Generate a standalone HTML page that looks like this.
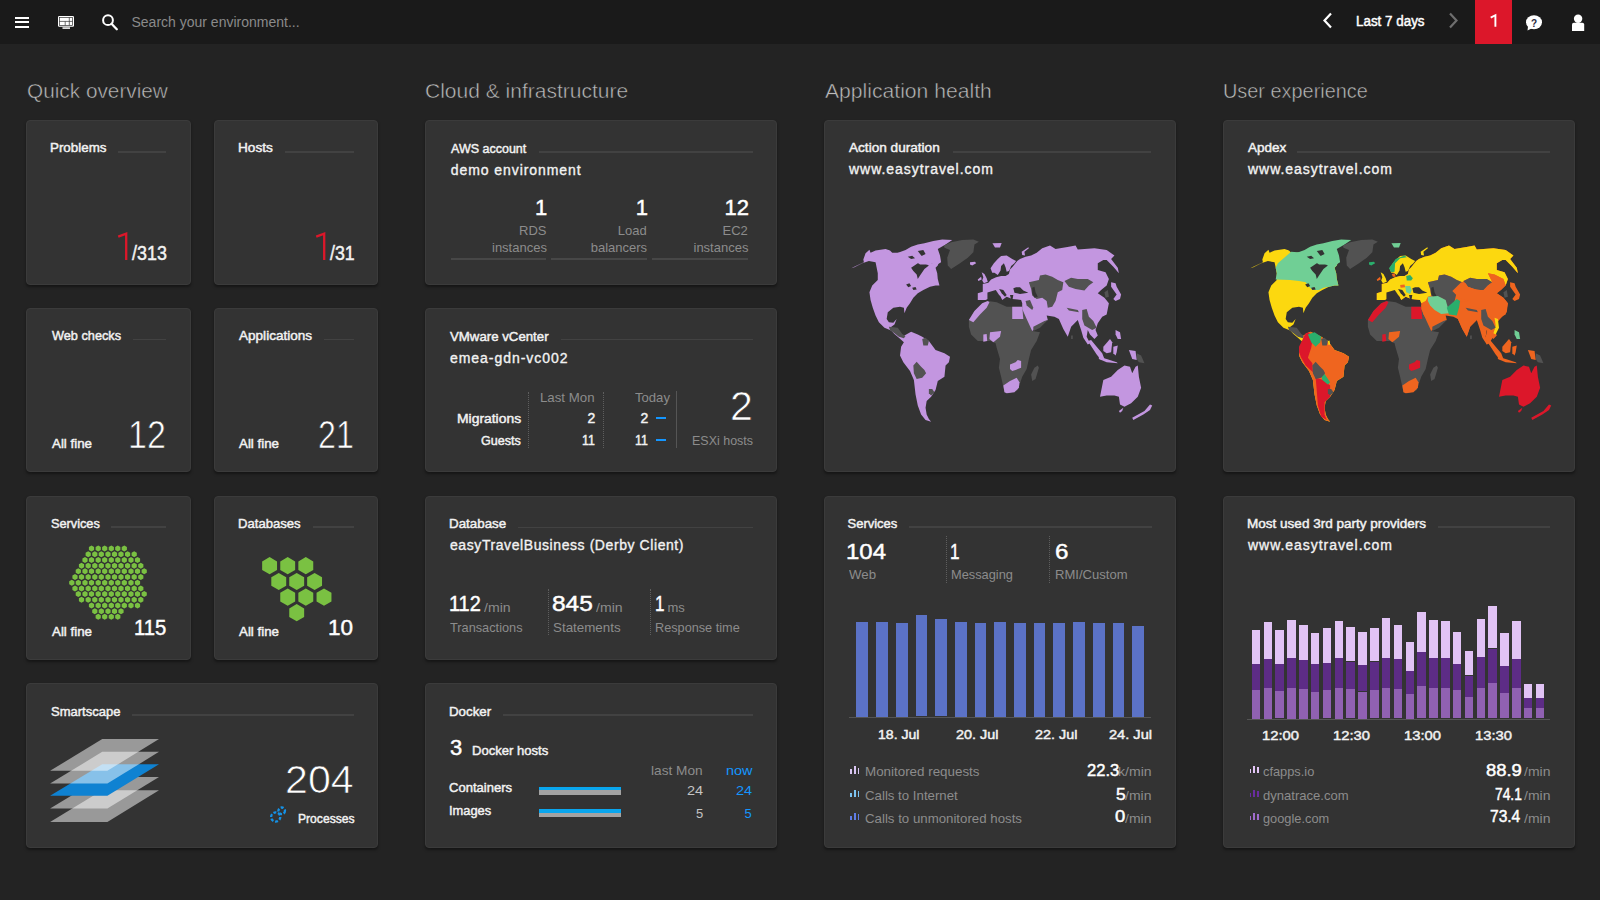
<!DOCTYPE html><html><head><meta charset="utf-8"><style>
html,body{margin:0;padding:0;width:1600px;height:900px;overflow:hidden;background:#232323;font-family:"Liberation Sans",sans-serif}
.t{position:absolute;white-space:nowrap;transform-origin:0 0}
.r{position:absolute}
.s{position:absolute;overflow:visible}
.tile{position:absolute;box-sizing:border-box;background:#333333;border:1px solid #3b3b3b;border-radius:4px;box-shadow:0 2px 3px rgba(0,0,0,.4)}
</style></head><body>
<div class="r" style="left:0.00px;top:0.00px;width:1600.00px;height:44.00px;background:#1a1a1a;"></div>
<div class="r" style="left:15.00px;top:16.80px;width:14.00px;height:2.10px;background:#fff;"></div>
<div class="r" style="left:15.00px;top:21.20px;width:14.00px;height:2.10px;background:#fff;"></div>
<div class="r" style="left:15.00px;top:25.60px;width:14.00px;height:2.10px;background:#fff;"></div>
<svg class="s" style="left:56px;top:14px" width="22" height="18" viewBox="0 0 22 18">
<rect x="2" y="2" width="16" height="10.8" rx="1.2" fill="#fff"/>
<rect x="3.4" y="3.4" width="13.2" height="8" fill="none" stroke="#333" stroke-width="0.7"/>
<path d="M3.4 7.4H16.6M13.3 3.4V11.4M9.2 7.4V11.4" stroke="#333" stroke-width="0.7"/>
<rect x="6.5" y="13.2" width="7.5" height="1.8" fill="#ddd"/></svg>
<svg class="s" style="left:100px;top:12px" width="22" height="22" viewBox="0 0 22 22">
<circle cx="8" cy="8.2" r="4.9" fill="none" stroke="#fff" stroke-width="2"/>
<path d="M11.5 11.8L16.8 17.2" stroke="#fff" stroke-width="2.3" stroke-linecap="round"/></svg>
<div class="t" style="left:131.50px;top:15.00px;font-size:14px;line-height:14px;color:#8a8a8a;">Search your environment...</div>
<svg class="s" style="left:1318px;top:10px" width="20" height="22" viewBox="0 0 20 22">
<path d="M13 3.5L6.5 10.5L13 17.5" fill="none" stroke="#fff" stroke-width="2.2"/></svg>
<div class="t" style="left:1356.04px;top:14.00px;font-size:14px;line-height:14px;color:#fff;transform:scaleX(0.9577);-webkit-text-stroke:0.45px #fff;">Last 7 days</div>
<svg class="s" style="left:1444px;top:10px" width="20" height="22" viewBox="0 0 20 22">
<path d="M6 3.5L12.5 10.5L6 17.5" fill="none" stroke="#6e6e6e" stroke-width="2.2"/></svg>
<div class="r" style="left:1475.00px;top:0.00px;width:37.00px;height:44.00px;background:#dc172a;"></div>
<svg class="s" style="left:1480px;top:10px" width="30" height="24" viewBox="0 0 30 24"><path d="M10.7 7.6L15.4 5.2V16.8" fill="none" stroke="#fff" stroke-width="1.9"/></svg>
<svg class="s" style="left:1524px;top:12px" width="22" height="22" viewBox="0 0 22 22">
<ellipse cx="10" cy="10.3" rx="8" ry="7" fill="#fff"/><path d="M4 14.5L3.5 18.5L8.5 16" fill="#fff"/>
<text x="10" y="14.5" font-family="Liberation Sans" font-size="10" font-weight="bold" text-anchor="middle" fill="#2a2a40">?</text></svg>
<svg class="s" style="left:1568px;top:12px" width="20" height="22" viewBox="0 0 20 22">
<circle cx="10.1" cy="6.7" r="4.2" fill="#fff"/><path d="M4 19V12.5Q4 10.8 5.8 10.8H14.4Q16.2 10.8 16.2 12.5V19Z" fill="#fff"/></svg>
<div class="t" style="left:26.51px;top:80.00px;font-size:21px;line-height:21px;color:#bcbcbc;transform:scaleX(0.9894);-webkit-text-stroke:0.5px #232323;">Quick overview</div>
<div class="t" style="left:425.00px;top:80.00px;font-size:21px;line-height:21px;color:#bcbcbc;-webkit-text-stroke:0.5px #232323;">Cloud &amp; infrastructure</div>
<div class="t" style="left:824.80px;top:80.00px;font-size:21px;line-height:21px;color:#bcbcbc;transform:scaleX(1.0061);-webkit-text-stroke:0.5px #232323;">Application health</div>
<div class="t" style="left:1222.85px;top:80.00px;font-size:21px;line-height:21px;color:#bcbcbc;transform:scaleX(0.9470);-webkit-text-stroke:0.5px #232323;">User experience</div>
<div class="tile" style="left:26px;top:120px;width:165px;height:165px"></div>
<div class="tile" style="left:214px;top:120px;width:164px;height:165px"></div>
<div class="tile" style="left:26px;top:308px;width:165px;height:164px"></div>
<div class="tile" style="left:214px;top:308px;width:164px;height:164px"></div>
<div class="tile" style="left:26px;top:496px;width:165px;height:164px"></div>
<div class="tile" style="left:214px;top:496px;width:164px;height:164px"></div>
<div class="tile" style="left:26px;top:683px;width:352px;height:165px"></div>
<div class="tile" style="left:425px;top:120px;width:352px;height:165px"></div>
<div class="tile" style="left:425px;top:308px;width:352px;height:164px"></div>
<div class="tile" style="left:425px;top:496px;width:352px;height:164px"></div>
<div class="tile" style="left:425px;top:683px;width:352px;height:165px"></div>
<div class="tile" style="left:824px;top:120px;width:352px;height:352px"></div>
<div class="tile" style="left:824px;top:496px;width:352px;height:352px"></div>
<div class="tile" style="left:1223px;top:120px;width:352px;height:352px"></div>
<div class="tile" style="left:1223px;top:496px;width:352px;height:352px"></div>
<div class="t" style="left:50.47px;top:141.00px;font-size:13px;line-height:13px;color:#f2f2f2;transform:scaleX(1.0283);-webkit-text-stroke:0.45px #f2f2f2;">Problems</div>
<div class="r" style="left:118.00px;top:151.00px;width:48.00px;height:1.60px;background:#424242;"></div>
<svg class="s" style="left:110px;top:228px" width="24" height="36" viewBox="0 0 24 36"><path d="M8.2 8.6L16.2 5.6V32" fill="none" stroke="#dc172a" stroke-width="2.3" stroke-linejoin="miter"/></svg>
<div class="t" style="left:131.60px;top:243.10px;font-size:20px;line-height:20px;color:#f2f2f2;transform:scaleX(0.8947);-webkit-text-stroke:0.45px #f2f2f2;">/313</div>
<div class="t" style="left:237.95px;top:141.00px;font-size:13px;line-height:13px;color:#f2f2f2;transform:scaleX(1.0469);-webkit-text-stroke:0.45px #f2f2f2;">Hosts</div>
<div class="r" style="left:285.00px;top:151.00px;width:69.00px;height:1.60px;background:#424242;"></div>
<svg class="s" style="left:308px;top:228px" width="24" height="36" viewBox="0 0 24 36"><path d="M8.2 8.6L16.2 5.6V32" fill="none" stroke="#dc172a" stroke-width="2.3" stroke-linejoin="miter"/></svg>
<div class="t" style="left:330.00px;top:243.10px;font-size:20px;line-height:20px;color:#f2f2f2;transform:scaleX(0.8889);-webkit-text-stroke:0.45px #f2f2f2;">/31</div>
<div class="t" style="left:52.00px;top:329.00px;font-size:13px;line-height:13px;color:#f2f2f2;transform:scaleX(0.9786);-webkit-text-stroke:0.45px #f2f2f2;">Web checks</div>
<div class="r" style="left:132.50px;top:338.50px;width:33.50px;height:1.60px;background:#424242;"></div>
<div class="t" style="left:52.00px;top:437.00px;font-size:13px;line-height:13px;color:#f2f2f2;transform:scaleX(1.0256);-webkit-text-stroke:0.45px #f2f2f2;">All fine</div>
<div class="t" style="left:128.38px;top:415.00px;font-size:39px;line-height:39px;color:#fff;transform:scaleX(0.8718);-webkit-text-stroke:0.7px #333;">12</div>
<div class="t" style="left:239.00px;top:329.00px;font-size:13px;line-height:13px;color:#f2f2f2;transform:scaleX(1.0429);-webkit-text-stroke:0.45px #f2f2f2;">Applications</div>
<div class="r" style="left:324.00px;top:338.50px;width:30.00px;height:1.60px;background:#424242;"></div>
<div class="t" style="left:239.00px;top:437.00px;font-size:13px;line-height:13px;color:#f2f2f2;transform:scaleX(1.0256);-webkit-text-stroke:0.45px #f2f2f2;">All fine</div>
<div class="t" style="left:317.85px;top:415.00px;font-size:39px;line-height:39px;color:#fff;transform:scaleX(0.8250);-webkit-text-stroke:0.7px #333;">21</div>
<div class="t" style="left:51.02px;top:517.00px;font-size:13px;line-height:13px;color:#f2f2f2;transform:scaleX(0.9792);-webkit-text-stroke:0.45px #f2f2f2;">Services</div>
<div class="r" style="left:111.00px;top:526.00px;width:55.00px;height:1.60px;background:#424242;"></div>
<div class="t" style="left:52.00px;top:624.50px;font-size:13px;line-height:13px;color:#f2f2f2;transform:scaleX(1.0256);-webkit-text-stroke:0.45px #f2f2f2;">All fine</div>
<div class="t" style="left:134.16px;top:617.00px;font-size:22px;line-height:22px;color:#fff;transform:scaleX(0.9219);-webkit-text-stroke:0.45px #fff;">115</div>
<div class="t" style="left:237.99px;top:517.00px;font-size:13px;line-height:13px;color:#f2f2f2;transform:scaleX(1.0082);-webkit-text-stroke:0.45px #f2f2f2;">Databases</div>
<div class="r" style="left:312.50px;top:526.00px;width:41.50px;height:1.60px;background:#424242;"></div>
<div class="t" style="left:239.00px;top:624.50px;font-size:13px;line-height:13px;color:#f2f2f2;transform:scaleX(1.0256);-webkit-text-stroke:0.45px #f2f2f2;">All fine</div>
<div class="t" style="left:328.45px;top:617.00px;font-size:22px;line-height:22px;color:#fff;transform:scaleX(1.0227);-webkit-text-stroke:0.45px #fff;">10</div>
<div class="t" style="left:51.00px;top:705.00px;font-size:13px;line-height:13px;color:#f2f2f2;-webkit-text-stroke:0.45px #f2f2f2;">Smartscape</div>
<div class="r" style="left:132.00px;top:714.00px;width:222.00px;height:1.60px;background:#424242;"></div>
<div class="t" style="left:285.33px;top:760.50px;font-size:38px;line-height:38px;color:#fff;transform:scaleX(1.0833);-webkit-text-stroke:0.7px #333;">204</div>
<div class="t" style="left:298.07px;top:812.00px;font-size:13px;line-height:13px;color:#f2f2f2;transform:scaleX(0.9322);-webkit-text-stroke:0.45px #f2f2f2;">Processes</div>
<div class="t" style="left:450.70px;top:141.50px;font-size:13px;line-height:13px;color:#f2f2f2;transform:scaleX(0.9620);-webkit-text-stroke:0.45px #f2f2f2;">AWS account</div>
<div class="r" style="left:539.00px;top:151.00px;width:214.00px;height:1.60px;background:#424242;"></div>
<div class="t" style="left:450.70px;top:163.20px;font-size:14px;line-height:14px;color:#f2f2f2;-webkit-text-stroke:0.35px #f2f2f2;letter-spacing:0.933px;">demo environment</div>
<div class="t" style="left:535.00px;top:196.70px;font-size:22px;line-height:22px;color:#fff;-webkit-text-stroke:0.45px #fff;">1</div>
<div class="t" style="left:519.00px;top:224.20px;font-size:13px;line-height:13px;color:#8c8c8c;">RDS</div>
<div class="t" style="left:492.00px;top:240.50px;font-size:13px;line-height:13px;color:#8c8c8c;">instances</div>
<div class="r" style="left:450.70px;top:258.00px;width:95.30px;height:2.00px;background:#474747;"></div>
<div class="t" style="left:635.70px;top:196.70px;font-size:22px;line-height:22px;color:#fff;-webkit-text-stroke:0.45px #fff;">1</div>
<div class="t" style="left:617.70px;top:224.20px;font-size:13px;line-height:13px;color:#8c8c8c;">Load</div>
<div class="t" style="left:590.70px;top:240.50px;font-size:13px;line-height:13px;color:#8c8c8c;">balancers</div>
<div class="r" style="left:551.00px;top:258.00px;width:95.70px;height:2.00px;background:#474747;"></div>
<div class="t" style="left:724.50px;top:196.70px;font-size:22px;line-height:22px;color:#fff;-webkit-text-stroke:0.45px #fff;">12</div>
<div class="t" style="left:722.50px;top:224.20px;font-size:13px;line-height:13px;color:#8c8c8c;">EC2</div>
<div class="t" style="left:693.50px;top:240.50px;font-size:13px;line-height:13px;color:#8c8c8c;">instances</div>
<div class="r" style="left:652.00px;top:258.00px;width:95.50px;height:2.00px;background:#474747;"></div>
<div class="t" style="left:450.00px;top:329.50px;font-size:13px;line-height:13px;color:#f2f2f2;transform:scaleX(1.0180);-webkit-text-stroke:0.45px #f2f2f2;">VMware vCenter</div>
<div class="r" style="left:560.75px;top:338.50px;width:191.75px;height:1.60px;background:#424242;"></div>
<div class="t" style="left:450.00px;top:350.50px;font-size:14px;line-height:14px;color:#f2f2f2;-webkit-text-stroke:0.35px #f2f2f2;letter-spacing:0.962px;">emea-gdn-vc002</div>
<div class="t" style="left:457.43px;top:412.00px;font-size:13px;line-height:13px;color:#f2f2f2;transform:scaleX(1.0690);-webkit-text-stroke:0.45px #f2f2f2;">Migrations</div>
<div class="t" style="left:480.83px;top:433.50px;font-size:13px;line-height:13px;color:#f2f2f2;transform:scaleX(0.9675);-webkit-text-stroke:0.45px #f2f2f2;">Guests</div>
<div class="t" style="left:540.48px;top:391.00px;font-size:13px;line-height:13px;color:#8c8c8c;transform:scaleX(1.0192);">Last Mon</div>
<div class="t" style="left:587.50px;top:411.00px;font-size:14px;line-height:14px;color:#f2f2f2;-webkit-text-stroke:0.45px #f2f2f2;">2</div>
<div class="t" style="left:582.12px;top:432.50px;font-size:14px;line-height:14px;color:#f2f2f2;transform:scaleX(0.8846);-webkit-text-stroke:0.45px #f2f2f2;">11</div>
<div class="t" style="left:634.50px;top:391.00px;font-size:13px;line-height:13px;color:#8c8c8c;transform:scaleX(1.0074);">Today</div>
<div class="t" style="left:640.50px;top:411.00px;font-size:14px;line-height:14px;color:#f2f2f2;-webkit-text-stroke:0.45px #f2f2f2;">2</div>
<div class="t" style="left:635.12px;top:432.50px;font-size:14px;line-height:14px;color:#f2f2f2;transform:scaleX(0.8846);-webkit-text-stroke:0.45px #f2f2f2;">11</div>
<div class="r" style="left:656.00px;top:417.00px;width:9.50px;height:2.00px;background:#1496ff;"></div>
<div class="r" style="left:656.00px;top:438.50px;width:9.50px;height:2.00px;background:#1496ff;"></div>
<div class="r" style="left:528.0px;top:391.5px;width:0;height:56.5px;border-left:1px dotted #5e5e5e"></div>
<div class="r" style="left:602.5px;top:391.5px;width:0;height:56.5px;border-left:1px dotted #5e5e5e"></div>
<div class="r" style="left:676.00px;top:391.00px;width:1.00px;height:57.00px;background:#555;"></div>
<div class="t" style="left:730.44px;top:385.50px;font-size:40px;line-height:40px;color:#fff;transform:scaleX(1.0278);-webkit-text-stroke:0.7px #333;">2</div>
<div class="t" style="left:692.04px;top:433.50px;font-size:13px;line-height:13px;color:#8c8c8c;transform:scaleX(0.9597);">ESXi hosts</div>
<div class="t" style="left:448.97px;top:517.00px;font-size:13px;line-height:13px;color:#f2f2f2;transform:scaleX(1.0278);-webkit-text-stroke:0.45px #f2f2f2;">Database</div>
<div class="r" style="left:517.50px;top:526.50px;width:235.00px;height:1.60px;background:#424242;"></div>
<div class="t" style="left:450.00px;top:538.00px;font-size:14px;line-height:14px;color:#f2f2f2;-webkit-text-stroke:0.35px #f2f2f2;letter-spacing:0.578px;">easyTravelBusiness (Derby Client)</div>
<div class="t" style="left:448.59px;top:593.10px;font-size:22px;line-height:22px;color:#fff;transform:scaleX(0.9062);-webkit-text-stroke:0.45px #fff;">112</div>
<div class="t" style="left:484.00px;top:600.60px;font-size:13px;line-height:13px;color:#8c8c8c;transform:scaleX(1.0833);">/min</div>
<div class="t" style="left:450.40px;top:620.60px;font-size:13px;line-height:13px;color:#8c8c8c;transform:scaleX(0.9808);">Transactions</div>
<div class="t" style="left:552.49px;top:593.10px;font-size:22px;line-height:22px;color:#fff;transform:scaleX(1.1118);-webkit-text-stroke:0.45px #fff;">845</div>
<div class="t" style="left:596.00px;top:600.60px;font-size:13px;line-height:13px;color:#8c8c8c;transform:scaleX(1.0833);">/min</div>
<div class="t" style="left:552.57px;top:620.60px;font-size:13px;line-height:13px;color:#8c8c8c;transform:scaleX(1.0281);">Statements</div>
<div class="t" style="left:654.84px;top:593.10px;font-size:22px;line-height:22px;color:#fff;transform:scaleX(0.7778);-webkit-text-stroke:0.45px #fff;">1</div>
<div class="t" style="left:667.40px;top:600.60px;font-size:13px;line-height:13px;color:#8c8c8c;">ms</div>
<div class="t" style="left:655.42px;top:620.60px;font-size:13px;line-height:13px;color:#8c8c8c;transform:scaleX(0.9767);">Response time</div>
<div class="r" style="left:547.6px;top:589px;width:0;height:46px;border-left:1px dotted #5e5e5e"></div>
<div class="r" style="left:650.0px;top:589px;width:0;height:46px;border-left:1px dotted #5e5e5e"></div>
<div class="t" style="left:448.98px;top:705.00px;font-size:13px;line-height:13px;color:#f2f2f2;transform:scaleX(1.0250);-webkit-text-stroke:0.45px #f2f2f2;">Docker</div>
<div class="r" style="left:503.00px;top:714.00px;width:249.50px;height:1.60px;background:#424242;"></div>
<div class="t" style="left:450.00px;top:736.50px;font-size:22px;line-height:22px;color:#fff;-webkit-text-stroke:0.45px #fff;">3</div>
<div class="t" style="left:471.59px;top:744.00px;font-size:13px;line-height:13px;color:#f2f2f2;transform:scaleX(1.0054);-webkit-text-stroke:0.45px #f2f2f2;">Docker hosts</div>
<div class="t" style="left:651.45px;top:763.50px;font-size:13px;line-height:13px;color:#8c8c8c;transform:scaleX(1.0521);">last Mon</div>
<div class="t" style="left:725.79px;top:763.50px;font-size:13px;line-height:13px;color:#1496ff;transform:scaleX(1.1136);">now</div>
<div class="t" style="left:449.40px;top:781.00px;font-size:13px;line-height:13px;color:#f2f2f2;transform:scaleX(1.0033);-webkit-text-stroke:0.45px #f2f2f2;">Containers</div>
<div class="t" style="left:449.41px;top:803.50px;font-size:13px;line-height:13px;color:#f2f2f2;transform:scaleX(0.9902);-webkit-text-stroke:0.45px #f2f2f2;">Images</div>
<div class="r" style="left:539.00px;top:786.60px;width:82.00px;height:3.80px;background:#0aa6ee;"></div>
<div class="r" style="left:539.00px;top:790.40px;width:82.00px;height:4.60px;background:#a3a3a3;"></div>
<div class="r" style="left:539.00px;top:809.00px;width:82.00px;height:3.80px;background:#0aa6ee;"></div>
<div class="r" style="left:539.00px;top:812.80px;width:82.00px;height:4.60px;background:#a3a3a3;"></div>
<div class="t" style="left:687.38px;top:784.00px;font-size:13px;line-height:13px;color:#c4c4c4;transform:scaleX(1.1154);">24</div>
<div class="t" style="left:735.78px;top:784.00px;font-size:13px;line-height:13px;color:#1496ff;transform:scaleX(1.1154);">24</div>
<div class="t" style="left:696.00px;top:806.50px;font-size:13px;line-height:13px;color:#c4c4c4;">5</div>
<div class="t" style="left:744.40px;top:806.50px;font-size:13px;line-height:13px;color:#1496ff;">5</div>
<div class="t" style="left:849.00px;top:141.00px;font-size:13px;line-height:13px;color:#f2f2f2;transform:scaleX(1.0460);-webkit-text-stroke:0.45px #f2f2f2;">Action duration</div>
<div class="r" style="left:953.00px;top:151.00px;width:198.00px;height:1.60px;background:#424242;"></div>
<div class="t" style="left:849.00px;top:162.40px;font-size:14px;line-height:14px;color:#f2f2f2;-webkit-text-stroke:0.35px #f2f2f2;letter-spacing:0.959px;">www.easytravel.com</div>
<div class="t" style="left:1248.00px;top:141.00px;font-size:13px;line-height:13px;color:#f2f2f2;transform:scaleX(1.0389);-webkit-text-stroke:0.45px #f2f2f2;">Apdex</div>
<div class="r" style="left:1297.00px;top:151.00px;width:253.00px;height:1.60px;background:#424242;"></div>
<div class="t" style="left:1248.00px;top:162.40px;font-size:14px;line-height:14px;color:#f2f2f2;-webkit-text-stroke:0.35px #f2f2f2;letter-spacing:0.959px;">www.easytravel.com</div>
<div class="t" style="left:847.50px;top:516.80px;font-size:13px;line-height:13px;color:#f2f2f2;-webkit-text-stroke:0.45px #f2f2f2;">Services</div>
<div class="r" style="left:909.00px;top:526.00px;width:242.50px;height:1.60px;background:#424242;"></div>
<div class="t" style="left:846.32px;top:541.40px;font-size:22px;line-height:22px;color:#fff;transform:scaleX(1.0882);-webkit-text-stroke:0.45px #fff;">104</div>
<div class="t" style="left:848.50px;top:568.20px;font-size:13px;line-height:13px;color:#8c8c8c;transform:scaleX(1.0192);">Web</div>
<div class="t" style="left:950.44px;top:541.40px;font-size:22px;line-height:22px;color:#fff;transform:scaleX(0.7778);-webkit-text-stroke:0.45px #fff;">1</div>
<div class="t" style="left:951.02px;top:568.20px;font-size:13px;line-height:13px;color:#8c8c8c;transform:scaleX(0.9839);">Messaging</div>
<div class="t" style="left:1054.60px;top:541.40px;font-size:22px;line-height:22px;color:#fff;transform:scaleX(1.1000);-webkit-text-stroke:0.45px #fff;">6</div>
<div class="t" style="left:1054.70px;top:568.20px;font-size:13px;line-height:13px;color:#8c8c8c;transform:scaleX(1.0043);">RMI/Custom</div>
<div class="r" style="left:946.4px;top:536px;width:0;height:47px;border-left:1px dotted #5e5e5e"></div>
<div class="r" style="left:1048.7px;top:536px;width:0;height:47px;border-left:1px dotted #5e5e5e"></div>
<div class="r" style="left:856.40px;top:621.50px;width:11.80px;height:95.00px;background:#5b72c6;"></div>
<div class="r" style="left:876.10px;top:621.50px;width:11.80px;height:95.00px;background:#5b72c6;"></div>
<div class="r" style="left:895.80px;top:622.50px;width:11.80px;height:94.00px;background:#5b72c6;"></div>
<div class="r" style="left:915.50px;top:614.60px;width:11.80px;height:101.90px;background:#5b72c6;"></div>
<div class="r" style="left:935.20px;top:619.20px;width:11.80px;height:97.30px;background:#5b72c6;"></div>
<div class="r" style="left:954.90px;top:621.50px;width:11.80px;height:95.00px;background:#5b72c6;"></div>
<div class="r" style="left:974.60px;top:622.50px;width:11.80px;height:94.00px;background:#5b72c6;"></div>
<div class="r" style="left:994.30px;top:621.50px;width:11.80px;height:95.00px;background:#5b72c6;"></div>
<div class="r" style="left:1014.00px;top:622.50px;width:11.80px;height:94.00px;background:#5b72c6;"></div>
<div class="r" style="left:1033.70px;top:622.50px;width:11.80px;height:94.00px;background:#5b72c6;"></div>
<div class="r" style="left:1053.40px;top:622.50px;width:11.80px;height:94.00px;background:#5b72c6;"></div>
<div class="r" style="left:1073.10px;top:621.50px;width:11.80px;height:95.00px;background:#5b72c6;"></div>
<div class="r" style="left:1092.80px;top:622.50px;width:11.80px;height:94.00px;background:#5b72c6;"></div>
<div class="r" style="left:1112.50px;top:622.50px;width:11.80px;height:94.00px;background:#5b72c6;"></div>
<div class="r" style="left:1132.20px;top:626.00px;width:11.80px;height:90.50px;background:#5b72c6;"></div>
<div class="r" style="left:849.00px;top:716.50px;width:302.00px;height:1.20px;background:#555;"></div>
<div class="t" style="left:877.92px;top:728.00px;font-size:13px;line-height:13px;color:#f2f2f2;transform:scaleX(1.0833);-webkit-text-stroke:0.45px #f2f2f2;">18. Jul</div>
<div class="t" style="left:955.89px;top:728.00px;font-size:13px;line-height:13px;color:#f2f2f2;transform:scaleX(1.1083);-webkit-text-stroke:0.45px #f2f2f2;">20. Jul</div>
<div class="t" style="left:1034.79px;top:728.00px;font-size:13px;line-height:13px;color:#f2f2f2;transform:scaleX(1.1056);-webkit-text-stroke:0.45px #f2f2f2;">22. Jul</div>
<div class="t" style="left:1109.08px;top:728.00px;font-size:13px;line-height:13px;color:#f2f2f2;transform:scaleX(1.1222);-webkit-text-stroke:0.45px #f2f2f2;">24. Jul</div>
<div class="t" style="left:864.77px;top:765.25px;font-size:13px;line-height:13px;color:#8c8c8c;transform:scaleX(1.0291);">Monitored requests</div>
<div class="t" style="left:1117.67px;top:765.25px;font-size:13px;line-height:13px;color:#8c8c8c;transform:scaleX(1.0833);">k/min</div>
<div class="t" style="left:1086.87px;top:762.75px;font-size:16px;line-height:16px;color:#fff;transform:scaleX(1.0345);-webkit-text-stroke:0.45px #fff;">22.3</div>
<div class="r" style="left:850.30px;top:769.05px;width:1.80px;height:4.50px;background:#d9c6f2;"></div>
<div class="r" style="left:854.10px;top:766.05px;width:1.80px;height:7.50px;background:#d9c6f2;"></div>
<div class="r" style="left:857.60px;top:767.55px;width:1.80px;height:6.00px;background:#d9c6f2;"></div>
<div class="t" style="left:864.78px;top:789.00px;font-size:13px;line-height:13px;color:#8c8c8c;transform:scaleX(1.0189);">Calls to Internet</div>
<div class="t" style="left:1125.40px;top:789.00px;font-size:13px;line-height:13px;color:#8c8c8c;transform:scaleX(1.0771);">/min</div>
<div class="t" style="left:1115.91px;top:786.50px;font-size:16px;line-height:16px;color:#fff;transform:scaleX(1.0857);-webkit-text-stroke:0.45px #fff;">5</div>
<div class="r" style="left:850.30px;top:792.80px;width:1.80px;height:4.50px;background:#7cc4f2;"></div>
<div class="r" style="left:854.10px;top:789.80px;width:1.80px;height:7.50px;background:#7cc4f2;"></div>
<div class="r" style="left:857.60px;top:791.30px;width:1.80px;height:6.00px;background:#7cc4f2;"></div>
<div class="t" style="left:864.78px;top:811.90px;font-size:13px;line-height:13px;color:#8c8c8c;transform:scaleX(1.0197);">Calls to unmonitored hosts</div>
<div class="t" style="left:1125.40px;top:811.90px;font-size:13px;line-height:13px;color:#8c8c8c;transform:scaleX(1.0771);">/min</div>
<div class="t" style="left:1115.40px;top:809.40px;font-size:16px;line-height:16px;color:#fff;transform:scaleX(1.1500);-webkit-text-stroke:0.45px #fff;">0</div>
<div class="r" style="left:850.30px;top:815.70px;width:1.80px;height:4.50px;background:#5f7de6;"></div>
<div class="r" style="left:854.10px;top:812.70px;width:1.80px;height:7.50px;background:#5f7de6;"></div>
<div class="r" style="left:857.60px;top:814.20px;width:1.80px;height:6.00px;background:#5f7de6;"></div>
<div class="t" style="left:1246.96px;top:516.80px;font-size:13px;line-height:13px;color:#f2f2f2;transform:scaleX(1.0409);-webkit-text-stroke:0.45px #f2f2f2;">Most used 3rd party providers</div>
<div class="r" style="left:1438.40px;top:526.00px;width:111.60px;height:1.60px;background:#424242;"></div>
<div class="t" style="left:1248.00px;top:537.60px;font-size:14px;line-height:14px;color:#f2f2f2;-webkit-text-stroke:0.35px #f2f2f2;letter-spacing:0.959px;">www.easytravel.com</div>
<div class="r" style="left:1251.80px;top:629.60px;width:8.50px;height:34.40px;background:#e1c3f5;"></div>
<div class="r" style="left:1251.80px;top:664.00px;width:8.50px;height:26.00px;background:#5d2c86;"></div>
<div class="r" style="left:1251.80px;top:690.00px;width:8.50px;height:28.50px;background:#9061b2;"></div>
<div class="r" style="left:1263.63px;top:622.40px;width:8.50px;height:36.60px;background:#e1c3f5;"></div>
<div class="r" style="left:1263.63px;top:659.00px;width:8.50px;height:29.00px;background:#5d2c86;"></div>
<div class="r" style="left:1263.63px;top:688.00px;width:8.50px;height:30.50px;background:#9061b2;"></div>
<div class="r" style="left:1275.46px;top:629.60px;width:8.50px;height:34.40px;background:#e1c3f5;"></div>
<div class="r" style="left:1275.46px;top:664.00px;width:8.50px;height:27.30px;background:#5d2c86;"></div>
<div class="r" style="left:1275.46px;top:691.30px;width:8.50px;height:27.20px;background:#9061b2;"></div>
<div class="r" style="left:1287.29px;top:620.00px;width:8.50px;height:38.00px;background:#e1c3f5;"></div>
<div class="r" style="left:1287.29px;top:658.00px;width:8.50px;height:30.00px;background:#5d2c86;"></div>
<div class="r" style="left:1287.29px;top:688.00px;width:8.50px;height:30.50px;background:#9061b2;"></div>
<div class="r" style="left:1299.12px;top:624.70px;width:8.50px;height:35.60px;background:#e1c3f5;"></div>
<div class="r" style="left:1299.12px;top:660.30px;width:8.50px;height:28.70px;background:#5d2c86;"></div>
<div class="r" style="left:1299.12px;top:689.00px;width:8.50px;height:29.50px;background:#9061b2;"></div>
<div class="r" style="left:1310.95px;top:633.00px;width:8.50px;height:31.00px;background:#e1c3f5;"></div>
<div class="r" style="left:1310.95px;top:664.00px;width:8.50px;height:27.50px;background:#5d2c86;"></div>
<div class="r" style="left:1310.95px;top:691.50px;width:8.50px;height:27.00px;background:#9061b2;"></div>
<div class="r" style="left:1322.78px;top:628.30px;width:8.50px;height:34.40px;background:#e1c3f5;"></div>
<div class="r" style="left:1322.78px;top:662.70px;width:8.50px;height:27.70px;background:#5d2c86;"></div>
<div class="r" style="left:1322.78px;top:690.40px;width:8.50px;height:28.10px;background:#9061b2;"></div>
<div class="r" style="left:1334.61px;top:621.00px;width:8.50px;height:37.00px;background:#e1c3f5;"></div>
<div class="r" style="left:1334.61px;top:658.00px;width:8.50px;height:30.00px;background:#5d2c86;"></div>
<div class="r" style="left:1334.61px;top:688.00px;width:8.50px;height:30.50px;background:#9061b2;"></div>
<div class="r" style="left:1346.44px;top:627.10px;width:8.50px;height:34.40px;background:#e1c3f5;"></div>
<div class="r" style="left:1346.44px;top:661.50px;width:8.50px;height:27.70px;background:#5d2c86;"></div>
<div class="r" style="left:1346.44px;top:689.20px;width:8.50px;height:29.30px;background:#9061b2;"></div>
<div class="r" style="left:1358.27px;top:632.20px;width:8.50px;height:32.90px;background:#e1c3f5;"></div>
<div class="r" style="left:1358.27px;top:665.10px;width:8.50px;height:26.40px;background:#5d2c86;"></div>
<div class="r" style="left:1358.27px;top:691.50px;width:8.50px;height:27.00px;background:#9061b2;"></div>
<div class="r" style="left:1370.10px;top:628.40px;width:8.50px;height:33.10px;background:#e1c3f5;"></div>
<div class="r" style="left:1370.10px;top:661.50px;width:8.50px;height:28.60px;background:#5d2c86;"></div>
<div class="r" style="left:1370.10px;top:690.10px;width:8.50px;height:28.40px;background:#9061b2;"></div>
<div class="r" style="left:1381.93px;top:617.90px;width:8.50px;height:40.30px;background:#e1c3f5;"></div>
<div class="r" style="left:1381.93px;top:658.20px;width:8.50px;height:30.00px;background:#5d2c86;"></div>
<div class="r" style="left:1381.93px;top:688.20px;width:8.50px;height:30.30px;background:#9061b2;"></div>
<div class="r" style="left:1393.76px;top:624.80px;width:8.50px;height:34.50px;background:#e1c3f5;"></div>
<div class="r" style="left:1393.76px;top:659.30px;width:8.50px;height:29.80px;background:#5d2c86;"></div>
<div class="r" style="left:1393.76px;top:689.10px;width:8.50px;height:29.40px;background:#9061b2;"></div>
<div class="r" style="left:1405.59px;top:642.40px;width:8.50px;height:28.50px;background:#e1c3f5;"></div>
<div class="r" style="left:1405.59px;top:670.90px;width:8.50px;height:23.10px;background:#5d2c86;"></div>
<div class="r" style="left:1405.59px;top:694.00px;width:8.50px;height:24.50px;background:#9061b2;"></div>
<div class="r" style="left:1417.42px;top:612.10px;width:8.50px;height:40.00px;background:#e1c3f5;"></div>
<div class="r" style="left:1417.42px;top:652.10px;width:8.50px;height:33.70px;background:#5d2c86;"></div>
<div class="r" style="left:1417.42px;top:685.80px;width:8.50px;height:32.70px;background:#9061b2;"></div>
<div class="r" style="left:1429.25px;top:620.30px;width:8.50px;height:37.90px;background:#e1c3f5;"></div>
<div class="r" style="left:1429.25px;top:658.20px;width:8.50px;height:30.00px;background:#5d2c86;"></div>
<div class="r" style="left:1429.25px;top:688.20px;width:8.50px;height:30.30px;background:#9061b2;"></div>
<div class="r" style="left:1441.08px;top:621.30px;width:8.50px;height:36.60px;background:#e1c3f5;"></div>
<div class="r" style="left:1441.08px;top:657.90px;width:8.50px;height:29.90px;background:#5d2c86;"></div>
<div class="r" style="left:1441.08px;top:687.80px;width:8.50px;height:30.70px;background:#9061b2;"></div>
<div class="r" style="left:1452.91px;top:631.90px;width:8.50px;height:32.00px;background:#e1c3f5;"></div>
<div class="r" style="left:1452.91px;top:663.90px;width:8.50px;height:26.50px;background:#5d2c86;"></div>
<div class="r" style="left:1452.91px;top:690.40px;width:8.50px;height:28.10px;background:#9061b2;"></div>
<div class="r" style="left:1464.74px;top:650.60px;width:8.50px;height:24.90px;background:#e1c3f5;"></div>
<div class="r" style="left:1464.74px;top:675.50px;width:8.50px;height:21.60px;background:#5d2c86;"></div>
<div class="r" style="left:1464.74px;top:697.10px;width:8.50px;height:21.40px;background:#9061b2;"></div>
<div class="r" style="left:1476.57px;top:618.90px;width:8.50px;height:38.00px;background:#e1c3f5;"></div>
<div class="r" style="left:1476.57px;top:656.90px;width:8.50px;height:30.90px;background:#5d2c86;"></div>
<div class="r" style="left:1476.57px;top:687.80px;width:8.50px;height:30.70px;background:#9061b2;"></div>
<div class="r" style="left:1488.40px;top:605.90px;width:8.50px;height:42.60px;background:#e1c3f5;"></div>
<div class="r" style="left:1488.40px;top:648.50px;width:8.50px;height:34.60px;background:#5d2c86;"></div>
<div class="r" style="left:1488.40px;top:683.10px;width:8.50px;height:35.40px;background:#9061b2;"></div>
<div class="r" style="left:1500.23px;top:632.90px;width:8.50px;height:33.20px;background:#e1c3f5;"></div>
<div class="r" style="left:1500.23px;top:666.10px;width:8.50px;height:26.70px;background:#5d2c86;"></div>
<div class="r" style="left:1500.23px;top:692.80px;width:8.50px;height:25.70px;background:#9061b2;"></div>
<div class="r" style="left:1512.06px;top:621.00px;width:8.50px;height:38.30px;background:#e1c3f5;"></div>
<div class="r" style="left:1512.06px;top:659.30px;width:8.50px;height:28.50px;background:#5d2c86;"></div>
<div class="r" style="left:1512.06px;top:687.80px;width:8.50px;height:30.70px;background:#9061b2;"></div>
<div class="r" style="left:1523.89px;top:684.20px;width:8.50px;height:13.40px;background:#e1c3f5;"></div>
<div class="r" style="left:1523.89px;top:697.60px;width:8.50px;height:10.10px;background:#5d2c86;"></div>
<div class="r" style="left:1523.89px;top:707.70px;width:8.50px;height:10.80px;background:#9061b2;"></div>
<div class="r" style="left:1535.72px;top:684.20px;width:8.50px;height:13.40px;background:#e1c3f5;"></div>
<div class="r" style="left:1535.72px;top:697.60px;width:8.50px;height:10.10px;background:#5d2c86;"></div>
<div class="r" style="left:1535.72px;top:707.70px;width:8.50px;height:10.80px;background:#9061b2;"></div>
<div class="r" style="left:1247.00px;top:718.50px;width:303.00px;height:1.20px;background:#555;"></div>
<div class="t" style="left:1262.46px;top:729.30px;font-size:13px;line-height:13px;color:#f2f2f2;transform:scaleX(1.1387);-webkit-text-stroke:0.45px #f2f2f2;">12:00</div>
<div class="t" style="left:1333.16px;top:729.30px;font-size:13px;line-height:13px;color:#f2f2f2;transform:scaleX(1.1387);-webkit-text-stroke:0.45px #f2f2f2;">12:30</div>
<div class="t" style="left:1403.86px;top:729.30px;font-size:13px;line-height:13px;color:#f2f2f2;transform:scaleX(1.1387);-webkit-text-stroke:0.45px #f2f2f2;">13:00</div>
<div class="t" style="left:1474.56px;top:729.30px;font-size:13px;line-height:13px;color:#f2f2f2;transform:scaleX(1.1387);-webkit-text-stroke:0.45px #f2f2f2;">13:30</div>
<div class="t" style="left:1262.90px;top:765.25px;font-size:13px;line-height:13px;color:#8c8c8c;transform:scaleX(0.9865);">cfapps.io</div>
<div class="t" style="left:1524.20px;top:765.25px;font-size:13px;line-height:13px;color:#8c8c8c;transform:scaleX(1.0750);">/min</div>
<div class="t" style="left:1485.85px;top:762.75px;font-size:16px;line-height:16px;color:#fff;transform:scaleX(1.1517);-webkit-text-stroke:0.45px #fff;">88.9</div>
<div class="r" style="left:1249.50px;top:768.85px;width:1.80px;height:4.50px;background:#e3c6f7;"></div>
<div class="r" style="left:1253.30px;top:765.85px;width:1.80px;height:7.50px;background:#e3c6f7;"></div>
<div class="r" style="left:1256.80px;top:767.35px;width:1.80px;height:6.00px;background:#e3c6f7;"></div>
<div class="t" style="left:1262.90px;top:789.00px;font-size:13px;line-height:13px;color:#8c8c8c;transform:scaleX(1.0036);">dynatrace.com</div>
<div class="t" style="left:1524.20px;top:789.00px;font-size:13px;line-height:13px;color:#8c8c8c;transform:scaleX(1.0750);">/min</div>
<div class="t" style="left:1494.54px;top:786.50px;font-size:16px;line-height:16px;color:#fff;transform:scaleX(0.8621);-webkit-text-stroke:0.45px #fff;">74.1</div>
<div class="r" style="left:1249.50px;top:792.60px;width:1.80px;height:4.50px;background:#6a2da0;"></div>
<div class="r" style="left:1253.30px;top:789.60px;width:1.80px;height:7.50px;background:#6a2da0;"></div>
<div class="r" style="left:1256.80px;top:791.10px;width:1.80px;height:6.00px;background:#6a2da0;"></div>
<div class="t" style="left:1262.90px;top:811.90px;font-size:13px;line-height:13px;color:#8c8c8c;transform:scaleX(0.9848);">google.com</div>
<div class="t" style="left:1524.20px;top:811.90px;font-size:13px;line-height:13px;color:#8c8c8c;transform:scaleX(1.0750);">/min</div>
<div class="t" style="left:1490.28px;top:809.40px;font-size:16px;line-height:16px;color:#fff;transform:scaleX(0.9717);-webkit-text-stroke:0.45px #fff;">73.4</div>
<div class="r" style="left:1249.50px;top:815.50px;width:1.80px;height:4.50px;background:#a06ccc;"></div>
<div class="r" style="left:1253.30px;top:812.50px;width:1.80px;height:7.50px;background:#a06ccc;"></div>
<div class="r" style="left:1256.80px;top:814.00px;width:1.80px;height:6.00px;background:#a06ccc;"></div>
<svg class="s" style="left:840px;top:230px" width="320" height="200" viewBox="0 0 2880 1800"><path d="M100 345 215 290 210 265 230 210 265 178 275 205 320 185 410 170 450 185 470 205 580 205 610 240 680 270 720 300 780 290 830 300 860 270 900 260 880 320 860 340 875 390 880 440 895 500 860 500 810 510 750 540 700 570 660 610 630 660 600 700 580 750 575 700 540 690 480 700 430 740 420 800 440 830 480 835 510 800 490 850 450 880 490 900 520 930 550 955 580 950 640 915 700 940 740 960 800 1000 830 1040 860 1080 940 1110 990 1140 980 1190 950 1220 940 1320 880 1360 860 1440 820 1500 780 1540 770 1600 780 1660 800 1700 820 1725 770 1710 730 1660 700 1580 680 1480 665 1350 630 1270 570 1190 540 1130 550 1050 575 1010 530 970 490 935 460 905 400 880 350 830 320 770 295 700 275 630 265 560 290 500 340 450 340 390 330 340 320 290 260 280 200 300 130 335Z" fill="#c396e0"/><path d="M640 340 700 300 760 300 800 320 760 350 740 380 720 410 700 440 690 400 660 370Z" fill="#333333"/><path d="M590 180 640 150 700 130 760 120 840 100 920 85 1010 90 950 130 880 170 900 230 910 290 860 320 830 300 780 310 720 310 680 280 560 240 480 220Z" fill="#c396e0"/><path d="M700 190 750 180 770 215 735 235Z" fill="#333333"/><path d="M610 240 650 232 675 255 640 262Z" fill="#333333"/><path d="M595 490 625 480 640 505 615 515Z" fill="#333333"/><path d="M650 520 680 512 690 535 660 540Z" fill="#333333"/><path d="M935 140 1000 110 1100 90 1200 85 1250 105 1210 130 1200 200 1150 250 1080 300 1000 350 970 320 965 250 990 180 940 160Z" fill="#525252"/><path d="M1170 290 1215 285 1225 300 1190 320 1170 310Z" fill="#c396e0"/><path d="M440 870 520 880 560 935 590 955 575 975 530 960 490 930 450 900Z" fill="#525252"/><path d="M660 1220 690 1185 730 1230 760 1260 775 1290 740 1330 690 1340 665 1290Z" fill="#525252"/><path d="M740 980 770 970 800 1000 790 1040 750 1040Z" fill="#525252"/><path d="M800 1430 830 1430 850 1460 820 1490 800 1470Z" fill="#525252"/><path d="M1160 810 1210 730 1280 660 1330 640 1410 650 1500 690 1550 690 1640 690 1670 760 1720 850 1730 910 1800 920 1770 1000 1720 1080 1700 1160 1680 1250 1640 1320 1620 1380 1600 1440 1520 1470 1480 1460 1450 1320 1430 1240 1440 1160 1410 1060 1400 1020 1360 1000 1240 1000 1180 940 1160 870Z" fill="#525252"/><path d="M1780 1220 1790 1240 1760 1340 1730 1360 1720 1300 1750 1240Z" fill="#525252"/><path d="M1160 810 1210 730 1280 660 1330 640 1345 650 1320 700 1260 760 1200 830Z" fill="#c396e0"/><path d="M1550 690 1640 690 1650 800 1550 800Z" fill="#c396e0"/><path d="M1350 920 1450 910 1440 960 1380 1010 1345 980Z" fill="#c396e0"/><path d="M1290 940 1320 935 1325 1000 1290 1005Z" fill="#c396e0"/><path d="M1530 1210 1580 1190 1600 1170 1630 1180 1630 1240 1580 1260 1550 1270 1530 1250Z" fill="#c396e0"/><path d="M1470 1400 1530 1360 1590 1330 1615 1370 1610 1420 1570 1460 1500 1470 1480 1460Z" fill="#c396e0"/><path d="M1240 630 1240 570 1285 555 1285 485 1335 475 1360 445 1405 425 1450 415 1490 415 1520 395 1530 355 1550 335 1570 310 1595 280 1620 260 1670 240 1720 230 1770 205 1820 165 1890 140 1940 170 2060 150 2120 140 2140 175 2290 165 2400 180 2470 230 2440 260 2500 340 2510 390 2460 330 2400 270 2370 270 2320 300 2320 360 2390 380 2420 440 2400 500 2350 540 2320 570 2380 610 2420 660 2400 760 2360 780 2320 840 2300 900 2320 950 2290 980 2250 940 2230 900 2220 960 2250 1020 2230 1030 2190 970 2170 900 2150 840 2140 810 2080 870 2050 960 2010 890 1970 800 1930 780 1860 770 1870 810 1800 850 1730 910 1680 800 1640 710 1640 660 1630 630 1550 620 1500 600 1460 630 1440 590 1380 600 1310 630Z" fill="#c396e0"/><path d="M1355 345 1385 300 1420 260 1450 235 1500 230 1550 260 1585 280 1570 300 1540 325 1530 350 1520 370 1500 375 1490 335 1475 300 1450 325 1445 365 1420 405 1390 385 1370 385Z" fill="#c396e0"/><path d="M1275 380 1300 395 1320 435 1330 465 1295 480 1280 455 1290 425Z" fill="#c396e0"/><path d="M1240 445 1270 420 1275 445 1245 460Z" fill="#c396e0"/><path d="M1635 195 1695 155 1700 165 1660 195 1665 230 1640 225Z" fill="#c396e0"/><path d="M1372 120 1455 116 1440 157 1395 157Z" fill="#c396e0"/><path d="M1327 562 1402 540 1432 585 1455 630 1327 637Z" fill="#333333"/><path d="M1432 532 1470 540 1500 585 1485 600 1455 570Z" fill="#333333"/><path d="M1530 585 1560 585 1552 630 1538 622Z" fill="#333333"/><path d="M1700 470 1790 450 1800 410 1850 400 1910 420 1960 450 2010 470 2000 540 1960 560 1950 600 1940 640 1910 690 1870 700 1860 640 1820 610 1770 620 1730 590 1720 530Z" fill="#525252"/><path d="M1730 520 1750 510 1760 560 1780 600 1750 610 1730 570Z" fill="#333333"/><path d="M2020 460 2080 430 2140 440 2230 440 2280 470 2240 500 2200 545 2120 530 2060 510Z" fill="#525252"/><path d="M1560 525 1585 515 1620 515 1650 545 1695 565 1620 575 1570 565Z" fill="#333333"/><path d="M1670 640 1710 630 1740 700 1730 720 1680 680Z" fill="#525252"/><path d="M1740 870 1840 820 1870 810 1800 880 1740 910Z" fill="#525252"/><path d="M2180 720 2220 710 2240 780 2280 820 2310 880 2270 900 2200 860 2180 800Z" fill="#525252"/><path d="M2040 700 2140 720 2150 740 2060 725Z" fill="#525252"/><path d="M2380 560 2410 540 2420 600 2390 610Z" fill="#525252"/><path d="M2080 950 2095 950 2095 980 2080 980Z" fill="#525252"/><path d="M2670 1110 2710 1130 2740 1200 2690 1190 2670 1160Z" fill="#525252"/><path d="M2440 470 2480 480 2490 510 2530 580 2520 620 2480 640 2460 620 2490 580 2440 510Z" fill="#c396e0"/><path d="M2230 1000 2260 990 2310 1050 2360 1110 2380 1160 2350 1170 2310 1120 2270 1060Z" fill="#c396e0"/><path d="M2330 1140 2400 1160 2490 1190 2500 1200 2400 1190 2330 1160Z" fill="#c396e0"/><path d="M2370 1050 2430 980 2450 1010 2440 1100 2400 1110 2370 1090Z" fill="#c396e0"/><path d="M2460 1050 2500 1040 2490 1100 2480 1130 2460 1110Z" fill="#c396e0"/><path d="M2480 900 2520 920 2530 980 2500 980 2480 940Z" fill="#c396e0"/><path d="M2600 1080 2660 1090 2670 1170 2630 1160Z" fill="#c396e0"/><path d="M2340 1500 2370 1350 2440 1320 2500 1260 2560 1220 2610 1230 2630 1290 2660 1230 2680 1220 2690 1320 2710 1420 2680 1500 2620 1560 2560 1590 2520 1570 2510 1500 2470 1490 2400 1490Z" fill="#c396e0"/><path d="M2510 1630 2550 1600 2540 1630 2520 1645Z" fill="#c396e0"/><path d="M2630 1690 2740 1630 2790 1570 2810 1580 2790 1620 2730 1660 2640 1710Z" fill="#c396e0"/></svg>
<svg class="s" style="left:1239px;top:230px" width="320" height="200" viewBox="0 0 2880 1800"><path d="M100 345 215 290 210 265 230 210 265 178 275 205 320 185 410 170 450 185 470 205 580 205 610 240 680 270 720 300 780 290 830 300 860 270 900 260 880 320 860 340 875 390 880 440 895 500 860 500 810 510 750 540 700 570 660 610 630 660 600 700 580 750 575 700 540 690 480 700 430 740 420 800 440 830 480 835 510 800 490 850 450 880 490 900 520 930 550 955 580 950 640 915 700 940 740 960 800 1000 830 1040 860 1080 940 1110 990 1140 980 1190 950 1220 940 1320 880 1360 860 1440 820 1500 780 1540 770 1600 780 1660 800 1700 820 1725 770 1710 730 1660 700 1580 680 1480 665 1350 630 1270 570 1190 540 1130 550 1050 575 1010 530 970 490 935 460 905 400 880 350 830 320 770 295 700 275 630 265 560 290 500 340 450 340 390 330 340 320 290 260 280 200 300 130 335Z" fill="#fcd80f"/><path d="M330 445 340 390 330 340 350 300 470 195 580 205 610 240 680 270 720 300 780 290 830 300 860 270 900 260 880 320 860 340 875 390 880 440 895 500 860 500 810 510 760 520 720 540 660 540 620 500 600 470 540 460 460 450Z" fill="#70cf95"/><path d="M640 340 700 300 760 300 800 320 760 350 740 380 720 410 700 440 690 400 660 370Z" fill="#333333"/><path d="M590 180 640 150 700 130 760 120 840 100 920 85 1010 90 950 130 880 170 900 230 910 290 860 320 830 300 780 310 720 310 680 280 560 240 480 220Z" fill="#70cf95"/><path d="M700 190 750 180 770 215 735 235Z" fill="#333333"/><path d="M610 240 650 232 675 255 640 262Z" fill="#333333"/><path d="M595 490 625 480 640 505 615 515Z" fill="#333333"/><path d="M650 520 680 512 690 535 660 540Z" fill="#333333"/><path d="M935 140 1000 110 1100 90 1200 85 1250 105 1210 130 1200 200 1150 250 1080 300 1000 350 970 320 965 250 990 180 940 160Z" fill="#525252"/><path d="M1170 290 1215 285 1225 300 1190 320 1170 310Z" fill="#2aae6c"/><path d="M440 870 520 880 560 935 590 955 575 975 530 960 490 930 450 900Z" fill="#525252"/><path d="M580 950 640 915 700 940 740 960 800 1000 830 1040 860 1080 940 1110 990 1140 980 1190 950 1220 940 1320 880 1360 860 1440 820 1500 780 1540 770 1600 780 1660 800 1700 820 1725 770 1710 730 1660 700 1580 680 1480 665 1350 630 1270 570 1190 540 1130 550 1050 575 1010Z" fill="#ef651f"/><path d="M540 1050 600 930 630 920 660 1000 650 1060 620 1150 660 1200 665 1280 600 1220 560 1150 540 1100Z" fill="#dc172a"/><path d="M620 940 680 920 740 960 730 1010 690 1050 650 1010Z" fill="#2aae6c"/><path d="M690 1330 760 1350 820 1400 820 1500 770 1550 770 1660 790 1710 740 1680 710 1580 700 1450Z" fill="#dc172a"/><path d="M740 1300 770 1295 820 1370 800 1390 750 1350Z" fill="#2aae6c"/><path d="M660 1220 690 1185 730 1230 760 1260 775 1290 740 1330 690 1340 665 1290Z" fill="#525252"/><path d="M740 980 770 970 800 1000 790 1040 750 1040Z" fill="#525252"/><path d="M800 1430 830 1430 850 1460 820 1490 800 1470Z" fill="#525252"/><path d="M800 1000 815 995 820 1030 805 1035Z" fill="#fcd80f"/><path d="M1160 810 1210 730 1280 660 1330 640 1410 650 1500 690 1550 690 1640 690 1670 760 1720 850 1730 910 1800 920 1770 1000 1720 1080 1700 1160 1680 1250 1640 1320 1620 1380 1600 1440 1520 1470 1480 1460 1450 1320 1430 1240 1440 1160 1410 1060 1400 1020 1360 1000 1240 1000 1180 940 1160 870Z" fill="#525252"/><path d="M1780 1220 1790 1240 1760 1340 1730 1360 1720 1300 1750 1240Z" fill="#525252"/><path d="M1160 810 1210 730 1280 660 1330 640 1345 650 1320 700 1260 760 1200 830Z" fill="#dc172a"/><path d="M1550 690 1640 690 1650 800 1550 800Z" fill="#dc172a"/><path d="M1350 920 1450 910 1440 960 1380 1010 1345 980Z" fill="#ef651f"/><path d="M1290 940 1320 935 1325 1000 1290 1005Z" fill="#dc172a"/><path d="M1530 1210 1580 1190 1600 1170 1630 1180 1630 1240 1580 1260 1550 1270 1530 1250Z" fill="#dc172a"/><path d="M1470 1400 1530 1360 1590 1330 1615 1370 1610 1420 1570 1460 1500 1470 1480 1460Z" fill="#ef651f"/><path d="M1240 630 1240 570 1285 555 1285 485 1335 475 1360 445 1405 425 1450 415 1490 415 1520 395 1530 355 1550 335 1570 310 1595 280 1620 260 1670 240 1720 230 1770 205 1820 165 1890 140 1940 170 2060 150 2120 140 2140 175 2290 165 2400 180 2470 230 2440 260 2500 340 2510 390 2460 330 2400 270 2370 270 2320 300 2320 360 2390 380 2420 440 2400 500 2350 540 2320 570 2380 610 2420 660 2400 760 2360 780 2320 840 2300 900 2320 950 2290 980 2250 940 2230 900 2220 960 2250 1020 2230 1030 2190 970 2170 900 2150 840 2140 810 2080 870 2050 960 2010 890 1970 800 1930 780 1860 770 1870 810 1800 850 1730 910 1680 800 1640 710 1640 660 1630 630 1550 620 1500 600 1460 630 1440 590 1380 600 1310 630Z" fill="#ef651f"/><path d="M1240 630 1240 570 1285 555 1285 485 1335 475 1360 445 1405 425 1450 415 1490 415 1520 395 1530 355 1550 335 1570 310 1595 280 1620 260 1670 240 1720 230 1770 205 1820 165 1890 140 1940 170 2060 150 2120 140 2140 175 2290 165 2400 180 2470 230 2440 260 2500 340 2510 390 2460 330 2400 270 2370 270 2320 300 2320 360 2390 380 2420 440 2400 500 2380 440 2300 400 2240 390 2280 470 2230 440 2140 440 2080 430 2020 460 2010 470 1960 450 1910 420 1850 400 1800 410 1790 450 1700 470 1720 530 1730 590 1700 600 1680 640 1640 660 1630 630 1550 620 1500 600 1460 630 1440 590 1380 600 1310 630Z" fill="#fcd80f"/><path d="M1355 345 1385 300 1420 260 1450 235 1500 230 1550 260 1585 280 1570 300 1540 325 1530 350 1520 370 1500 375 1490 335 1475 300 1450 325 1445 365 1420 405 1390 385 1370 385Z" fill="#fcd80f"/><path d="M1275 380 1300 395 1320 435 1330 465 1295 480 1280 455 1290 425Z" fill="#fcd80f"/><path d="M1240 445 1270 420 1275 445 1245 460Z" fill="#ef651f"/><path d="M1635 195 1695 155 1700 165 1660 195 1665 230 1640 225Z" fill="#fcd80f"/><path d="M1372 120 1455 116 1440 157 1395 157Z" fill="#70cf95"/><path d="M1327 562 1402 540 1432 585 1455 630 1327 637Z" fill="#333333"/><path d="M1432 532 1470 540 1500 585 1485 600 1455 570Z" fill="#333333"/><path d="M1530 585 1560 585 1552 630 1538 622Z" fill="#333333"/><path d="M1350 345 1410 260 1490 230 1510 245 1450 255 1405 300 1400 375 1370 380Z" fill="#2aae6c"/><path d="M1375 395 1400 390 1410 420 1385 420Z" fill="#ef651f"/><path d="M1505 415 1540 405 1565 435 1550 455 1510 455Z" fill="#2aae6c"/><path d="M1450 495 1490 490 1495 515 1455 520Z" fill="#ef651f"/><path d="M1495 505 1540 505 1555 540 1540 575 1505 560Z" fill="#70cf95"/><path d="M1700 470 1790 450 1800 410 1850 400 1910 420 1960 450 2010 470 2000 540 1960 560 1950 600 1940 640 1910 690 1870 700 1860 640 1820 610 1770 620 1730 590 1720 530Z" fill="#525252"/><path d="M1730 520 1750 510 1760 560 1780 600 1750 610 1730 570Z" fill="#333333"/><path d="M2020 460 2080 430 2140 440 2230 440 2280 470 2240 500 2200 545 2120 530 2060 510Z" fill="#525252"/><path d="M1560 525 1585 515 1620 515 1650 545 1695 565 1620 575 1570 565Z" fill="#333333"/><path d="M1920 550 2000 470 2040 480 2060 510 2140 540 2200 540 2240 500 2280 470 2240 390 2300 400 2380 440 2400 500 2360 540 2320 570 2380 610 2420 660 2410 740 2360 790 2320 830 2270 780 2200 720 2140 700 2080 640 2000 620 1960 590Z" fill="#ef651f"/><path d="M1960 690 2010 640 2080 650 2140 720 2200 730 2180 800 2140 810 2080 870 2050 960 2010 890 1970 800 1950 760Z" fill="#ef651f"/><path d="M1640 680 1680 640 1740 700 1810 760 1840 790 1820 840 1730 900 1700 820 1660 760Z" fill="#ef651f"/><path d="M1700 600 1790 595 1860 630 1880 700 1890 750 1820 755 1760 720 1720 680 1700 640Z" fill="#70cf95"/><path d="M1870 700 1960 620 1990 640 1980 700 1960 770 1890 760Z" fill="#2aae6c"/><path d="M2240 810 2280 800 2300 870 2290 960 2250 1020 2230 1030 2220 960 2240 880Z" fill="#ef651f"/><path d="M2300 790 2330 800 2340 880 2310 940 2290 930 2310 860Z" fill="#fcd80f"/><path d="M1740 870 1840 820 1870 810 1800 880 1740 910Z" fill="#525252"/><path d="M2180 720 2220 710 2240 780 2280 820 2310 880 2270 900 2200 860 2180 800Z" fill="#525252"/><path d="M2040 700 2140 720 2150 740 2060 725Z" fill="#525252"/><path d="M2380 560 2410 540 2420 600 2390 610Z" fill="#525252"/><path d="M2080 950 2095 950 2095 980 2080 980Z" fill="#525252"/><path d="M2670 1110 2710 1130 2740 1200 2690 1190 2670 1160Z" fill="#525252"/><path d="M2440 470 2480 480 2490 510 2530 580 2520 620 2480 640 2460 620 2490 580 2440 510Z" fill="#ef651f"/><path d="M2230 1000 2260 990 2310 1050 2360 1110 2380 1160 2350 1170 2310 1120 2270 1060Z" fill="#ef651f"/><path d="M2330 1140 2400 1160 2490 1190 2500 1200 2400 1190 2330 1160Z" fill="#ef651f"/><path d="M2370 1050 2430 980 2450 1010 2440 1100 2400 1110 2370 1090Z" fill="#ef651f"/><path d="M2460 1050 2500 1040 2490 1100 2480 1130 2460 1110Z" fill="#ef651f"/><path d="M2480 900 2520 920 2530 980 2500 980 2480 940Z" fill="#70cf95"/><path d="M2600 1080 2660 1090 2670 1170 2630 1160Z" fill="#ef651f"/><path d="M2340 1500 2370 1350 2440 1320 2500 1260 2560 1220 2610 1230 2630 1290 2660 1230 2680 1220 2690 1320 2710 1420 2680 1500 2620 1560 2560 1590 2520 1570 2510 1500 2470 1490 2400 1490Z" fill="#dc172a"/><path d="M2510 1630 2550 1600 2540 1630 2520 1645Z" fill="#dc172a"/><path d="M2630 1690 2740 1630 2790 1570 2810 1580 2790 1620 2730 1660 2640 1710Z" fill="#dc172a"/></svg>
<svg class="s" style="left:0;top:0" width="400" height="900"><path d="M91.50 551.50 88.90 550.00 88.90 547.00 91.50 545.50 94.10 547.00 94.10 550.00ZM98.20 551.50 95.60 550.00 95.60 547.00 98.20 545.50 100.80 547.00 100.80 550.00ZM104.70 551.50 102.10 550.00 102.10 547.00 104.70 545.50 107.30 547.00 107.30 550.00ZM111.30 551.50 108.70 550.00 108.70 547.00 111.30 545.50 113.90 547.00 113.90 550.00ZM117.80 551.50 115.20 550.00 115.20 547.00 117.80 545.50 120.40 547.00 120.40 550.00ZM124.30 551.50 121.70 550.00 121.70 547.00 124.30 545.50 126.90 547.00 126.90 550.00ZM88.20 557.20 85.60 555.70 85.60 552.70 88.20 551.20 90.80 552.70 90.80 555.70ZM94.80 557.20 92.20 555.70 92.20 552.70 94.80 551.20 97.40 552.70 97.40 555.70ZM101.30 557.20 98.70 555.70 98.70 552.70 101.30 551.20 103.90 552.70 103.90 555.70ZM108.00 557.20 105.40 555.70 105.40 552.70 108.00 551.20 110.60 552.70 110.60 555.70ZM114.50 557.20 111.90 555.70 111.90 552.70 114.50 551.20 117.10 552.70 117.10 555.70ZM121.00 557.20 118.40 555.70 118.40 552.70 121.00 551.20 123.60 552.70 123.60 555.70ZM127.60 557.20 125.00 555.70 125.00 552.70 127.60 551.20 130.20 552.70 130.20 555.70ZM134.20 557.20 131.60 555.70 131.60 552.70 134.20 551.20 136.80 552.70 136.80 555.70ZM85.00 563.00 82.40 561.50 82.40 558.50 85.00 557.00 87.60 558.50 87.60 561.50ZM91.50 563.00 88.90 561.50 88.90 558.50 91.50 557.00 94.10 558.50 94.10 561.50ZM98.20 563.00 95.60 561.50 95.60 558.50 98.20 557.00 100.80 558.50 100.80 561.50ZM104.70 563.00 102.10 561.50 102.10 558.50 104.70 557.00 107.30 558.50 107.30 561.50ZM111.30 563.00 108.70 561.50 108.70 558.50 111.30 557.00 113.90 558.50 113.90 561.50ZM117.80 563.00 115.20 561.50 115.20 558.50 117.80 557.00 120.40 558.50 120.40 561.50ZM124.30 563.00 121.70 561.50 121.70 558.50 124.30 557.00 126.90 558.50 126.90 561.50ZM131.00 563.00 128.40 561.50 128.40 558.50 131.00 557.00 133.60 558.50 133.60 561.50ZM137.50 563.00 134.90 561.50 134.90 558.50 137.50 557.00 140.10 558.50 140.10 561.50ZM81.50 568.70 78.90 567.20 78.90 564.20 81.50 562.70 84.10 564.20 84.10 567.20ZM88.20 568.70 85.60 567.20 85.60 564.20 88.20 562.70 90.80 564.20 90.80 567.20ZM94.80 568.70 92.20 567.20 92.20 564.20 94.80 562.70 97.40 564.20 97.40 567.20ZM101.30 568.70 98.70 567.20 98.70 564.20 101.30 562.70 103.90 564.20 103.90 567.20ZM108.00 568.70 105.40 567.20 105.40 564.20 108.00 562.70 110.60 564.20 110.60 567.20ZM114.50 568.70 111.90 567.20 111.90 564.20 114.50 562.70 117.10 564.20 117.10 567.20ZM121.00 568.70 118.40 567.20 118.40 564.20 121.00 562.70 123.60 564.20 123.60 567.20ZM127.60 568.70 125.00 567.20 125.00 564.20 127.60 562.70 130.20 564.20 130.20 567.20ZM134.20 568.70 131.60 567.20 131.60 564.20 134.20 562.70 136.80 564.20 136.80 567.20ZM140.80 568.70 138.20 567.20 138.20 564.20 140.80 562.70 143.40 564.20 143.40 567.20ZM78.30 574.20 75.70 572.70 75.70 569.70 78.30 568.20 80.90 569.70 80.90 572.70ZM85.00 574.20 82.40 572.70 82.40 569.70 85.00 568.20 87.60 569.70 87.60 572.70ZM91.50 574.20 88.90 572.70 88.90 569.70 91.50 568.20 94.10 569.70 94.10 572.70ZM98.20 574.20 95.60 572.70 95.60 569.70 98.20 568.20 100.80 569.70 100.80 572.70ZM104.70 574.20 102.10 572.70 102.10 569.70 104.70 568.20 107.30 569.70 107.30 572.70ZM111.30 574.20 108.70 572.70 108.70 569.70 111.30 568.20 113.90 569.70 113.90 572.70ZM117.80 574.20 115.20 572.70 115.20 569.70 117.80 568.20 120.40 569.70 120.40 572.70ZM124.30 574.20 121.70 572.70 121.70 569.70 124.30 568.20 126.90 569.70 126.90 572.70ZM131.00 574.20 128.40 572.70 128.40 569.70 131.00 568.20 133.60 569.70 133.60 572.70ZM137.50 574.20 134.90 572.70 134.90 569.70 137.50 568.20 140.10 569.70 140.10 572.70ZM144.20 574.20 141.60 572.70 141.60 569.70 144.20 568.20 146.80 569.70 146.80 572.70ZM75.00 580.00 72.40 578.50 72.40 575.50 75.00 574.00 77.60 575.50 77.60 578.50ZM81.50 580.00 78.90 578.50 78.90 575.50 81.50 574.00 84.10 575.50 84.10 578.50ZM88.20 580.00 85.60 578.50 85.60 575.50 88.20 574.00 90.80 575.50 90.80 578.50ZM94.80 580.00 92.20 578.50 92.20 575.50 94.80 574.00 97.40 575.50 97.40 578.50ZM101.30 580.00 98.70 578.50 98.70 575.50 101.30 574.00 103.90 575.50 103.90 578.50ZM108.00 580.00 105.40 578.50 105.40 575.50 108.00 574.00 110.60 575.50 110.60 578.50ZM114.50 580.00 111.90 578.50 111.90 575.50 114.50 574.00 117.10 575.50 117.10 578.50ZM121.00 580.00 118.40 578.50 118.40 575.50 121.00 574.00 123.60 575.50 123.60 578.50ZM127.60 580.00 125.00 578.50 125.00 575.50 127.60 574.00 130.20 575.50 130.20 578.50ZM134.20 580.00 131.60 578.50 131.60 575.50 134.20 574.00 136.80 575.50 136.80 578.50ZM140.80 580.00 138.20 578.50 138.20 575.50 140.80 574.00 143.40 575.50 143.40 578.50ZM71.80 585.80 69.20 584.30 69.20 581.30 71.80 579.80 74.40 581.30 74.40 584.30ZM78.30 585.80 75.70 584.30 75.70 581.30 78.30 579.80 80.90 581.30 80.90 584.30ZM85.00 585.80 82.40 584.30 82.40 581.30 85.00 579.80 87.60 581.30 87.60 584.30ZM91.50 585.80 88.90 584.30 88.90 581.30 91.50 579.80 94.10 581.30 94.10 584.30ZM98.20 585.80 95.60 584.30 95.60 581.30 98.20 579.80 100.80 581.30 100.80 584.30ZM104.70 585.80 102.10 584.30 102.10 581.30 104.70 579.80 107.30 581.30 107.30 584.30ZM111.30 585.80 108.70 584.30 108.70 581.30 111.30 579.80 113.90 581.30 113.90 584.30ZM117.80 585.80 115.20 584.30 115.20 581.30 117.80 579.80 120.40 581.30 120.40 584.30ZM124.30 585.80 121.70 584.30 121.70 581.30 124.30 579.80 126.90 581.30 126.90 584.30ZM131.00 585.80 128.40 584.30 128.40 581.30 131.00 579.80 133.60 581.30 133.60 584.30ZM137.50 585.80 134.90 584.30 134.90 581.30 137.50 579.80 140.10 581.30 140.10 584.30ZM75.00 591.50 72.40 590.00 72.40 587.00 75.00 585.50 77.60 587.00 77.60 590.00ZM81.50 591.50 78.90 590.00 78.90 587.00 81.50 585.50 84.10 587.00 84.10 590.00ZM88.20 591.50 85.60 590.00 85.60 587.00 88.20 585.50 90.80 587.00 90.80 590.00ZM94.80 591.50 92.20 590.00 92.20 587.00 94.80 585.50 97.40 587.00 97.40 590.00ZM101.30 591.50 98.70 590.00 98.70 587.00 101.30 585.50 103.90 587.00 103.90 590.00ZM108.00 591.50 105.40 590.00 105.40 587.00 108.00 585.50 110.60 587.00 110.60 590.00ZM114.50 591.50 111.90 590.00 111.90 587.00 114.50 585.50 117.10 587.00 117.10 590.00ZM121.00 591.50 118.40 590.00 118.40 587.00 121.00 585.50 123.60 587.00 123.60 590.00ZM127.60 591.50 125.00 590.00 125.00 587.00 127.60 585.50 130.20 587.00 130.20 590.00ZM134.20 591.50 131.60 590.00 131.60 587.00 134.20 585.50 136.80 587.00 136.80 590.00ZM140.80 591.50 138.20 590.00 138.20 587.00 140.80 585.50 143.40 587.00 143.40 590.00ZM78.30 597.00 75.70 595.50 75.70 592.50 78.30 591.00 80.90 592.50 80.90 595.50ZM85.00 597.00 82.40 595.50 82.40 592.50 85.00 591.00 87.60 592.50 87.60 595.50ZM91.50 597.00 88.90 595.50 88.90 592.50 91.50 591.00 94.10 592.50 94.10 595.50ZM98.20 597.00 95.60 595.50 95.60 592.50 98.20 591.00 100.80 592.50 100.80 595.50ZM104.70 597.00 102.10 595.50 102.10 592.50 104.70 591.00 107.30 592.50 107.30 595.50ZM111.30 597.00 108.70 595.50 108.70 592.50 111.30 591.00 113.90 592.50 113.90 595.50ZM117.80 597.00 115.20 595.50 115.20 592.50 117.80 591.00 120.40 592.50 120.40 595.50ZM124.30 597.00 121.70 595.50 121.70 592.50 124.30 591.00 126.90 592.50 126.90 595.50ZM131.00 597.00 128.40 595.50 128.40 592.50 131.00 591.00 133.60 592.50 133.60 595.50ZM137.50 597.00 134.90 595.50 134.90 592.50 137.50 591.00 140.10 592.50 140.10 595.50ZM144.20 597.00 141.60 595.50 141.60 592.50 144.20 591.00 146.80 592.50 146.80 595.50ZM81.50 602.80 78.90 601.30 78.90 598.30 81.50 596.80 84.10 598.30 84.10 601.30ZM88.20 602.80 85.60 601.30 85.60 598.30 88.20 596.80 90.80 598.30 90.80 601.30ZM94.80 602.80 92.20 601.30 92.20 598.30 94.80 596.80 97.40 598.30 97.40 601.30ZM101.30 602.80 98.70 601.30 98.70 598.30 101.30 596.80 103.90 598.30 103.90 601.30ZM108.00 602.80 105.40 601.30 105.40 598.30 108.00 596.80 110.60 598.30 110.60 601.30ZM114.50 602.80 111.90 601.30 111.90 598.30 114.50 596.80 117.10 598.30 117.10 601.30ZM121.00 602.80 118.40 601.30 118.40 598.30 121.00 596.80 123.60 598.30 123.60 601.30ZM127.60 602.80 125.00 601.30 125.00 598.30 127.60 596.80 130.20 598.30 130.20 601.30ZM134.20 602.80 131.60 601.30 131.60 598.30 134.20 596.80 136.80 598.30 136.80 601.30ZM140.80 602.80 138.20 601.30 138.20 598.30 140.80 596.80 143.40 598.30 143.40 601.30ZM91.50 608.50 88.90 607.00 88.90 604.00 91.50 602.50 94.10 604.00 94.10 607.00ZM98.20 608.50 95.60 607.00 95.60 604.00 98.20 602.50 100.80 604.00 100.80 607.00ZM104.70 608.50 102.10 607.00 102.10 604.00 104.70 602.50 107.30 604.00 107.30 607.00ZM111.30 608.50 108.70 607.00 108.70 604.00 111.30 602.50 113.90 604.00 113.90 607.00ZM117.80 608.50 115.20 607.00 115.20 604.00 117.80 602.50 120.40 604.00 120.40 607.00ZM124.30 608.50 121.70 607.00 121.70 604.00 124.30 602.50 126.90 604.00 126.90 607.00ZM131.00 608.50 128.40 607.00 128.40 604.00 131.00 602.50 133.60 604.00 133.60 607.00ZM137.50 608.50 134.90 607.00 134.90 604.00 137.50 602.50 140.10 604.00 140.10 607.00ZM94.80 614.20 92.20 612.70 92.20 609.70 94.80 608.20 97.40 609.70 97.40 612.70ZM101.30 614.20 98.70 612.70 98.70 609.70 101.30 608.20 103.90 609.70 103.90 612.70ZM108.00 614.20 105.40 612.70 105.40 609.70 108.00 608.20 110.60 609.70 110.60 612.70ZM114.50 614.20 111.90 612.70 111.90 609.70 114.50 608.20 117.10 609.70 117.10 612.70ZM121.00 614.20 118.40 612.70 118.40 609.70 121.00 608.20 123.60 609.70 123.60 612.70ZM98.20 619.80 95.60 618.30 95.60 615.30 98.20 613.80 100.80 615.30 100.80 618.30ZM104.70 619.80 102.10 618.30 102.10 615.30 104.70 613.80 107.30 615.30 107.30 618.30ZM111.30 619.80 108.70 618.30 108.70 615.30 111.30 613.80 113.90 615.30 113.90 618.30ZM117.80 619.80 115.20 618.30 115.20 615.30 117.80 613.80 120.40 615.30 120.40 618.30Z" fill="#7ac142"/></svg>
<svg class="s" style="left:0;top:0" width="400" height="900"><path d="M269.60 574.30 262.15 570.00 262.15 561.40 269.60 557.10 277.05 561.40 277.05 570.00ZM287.70 574.30 280.25 570.00 280.25 561.40 287.70 557.10 295.15 561.40 295.15 570.00ZM305.80 574.30 298.35 570.00 298.35 561.40 305.80 557.10 313.25 561.40 313.25 570.00ZM278.75 590.10 271.30 585.80 271.30 577.20 278.75 572.90 286.20 577.20 286.20 585.80ZM296.70 590.10 289.25 585.80 289.25 577.20 296.70 572.90 304.15 577.20 304.15 585.80ZM314.60 590.10 307.15 585.80 307.15 577.20 314.60 572.90 322.05 577.20 322.05 585.80ZM287.70 605.70 280.25 601.40 280.25 592.80 287.70 588.50 295.15 592.80 295.15 601.40ZM305.80 605.70 298.35 601.40 298.35 592.80 305.80 588.50 313.25 592.80 313.25 601.40ZM324.00 605.70 316.55 601.40 316.55 592.80 324.00 588.50 331.45 592.80 331.45 601.40ZM296.70 621.30 289.25 617.00 289.25 608.40 296.70 604.10 304.15 608.40 304.15 617.00Z" fill="#7ac142"/></svg>
<svg class="s" style="left:0;top:0" width="400" height="900"><path d="M102.26 790.21 159.01 790.21 107.37 821.91 50.11 821.91Z" fill="#ffffff" fill-opacity="0.5"/><path d="M102.26 776.92 159.01 776.92 107.37 808.62 50.11 808.62Z" fill="#ffffff" fill-opacity="0.5"/><path d="M102.26 764.14 159.01 764.14 107.37 795.84 50.11 795.84Z" fill="#0f82d2"/><path d="M102.26 751.87 159.01 751.87 107.37 783.57 50.11 783.57Z" fill="#ffffff" fill-opacity="0.5"/><path d="M102.26 739.09 159.01 739.09 107.37 770.79 50.11 770.79Z" fill="#ffffff" fill-opacity="0.5"/></svg>
<svg class="s" style="left:268px;top:805px" width="20" height="20" viewBox="0 0 20 20"><circle cx="7.7" cy="12" r="4.6" fill="none" stroke="#1592e6" stroke-width="2.3" stroke-dasharray="3 1.7"/><circle cx="13.7" cy="5.8" r="3.3" fill="none" stroke="#1592e6" stroke-width="2.3" stroke-dasharray="3 1.7"/></svg>
</body></html>
